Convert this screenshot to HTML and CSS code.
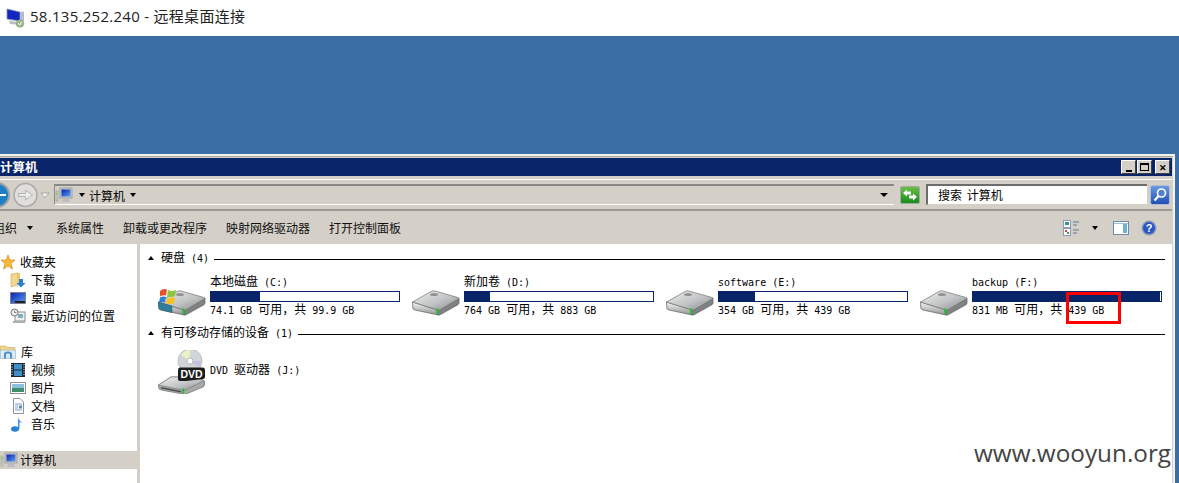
FILE: index.html
```html
<!DOCTYPE html>
<html lang="zh-CN">
<head>
  <meta charset="UTF-8">
  <title>58.135.252.240 - 远程桌面连接</title>
  <link rel="stylesheet" href="styles.css">
</head>
<body>

  <svg class="defs" width="0" height="0">
    <defs>
      <linearGradient id="hddTop" x1="0" y1="0" x2="1" y2="1">
        <stop offset="0" stop-color="#eeeeee"/>
        <stop offset=".55" stop-color="#c2c5c5"/>
        <stop offset="1" stop-color="#858989"/>
      </linearGradient>
      <linearGradient id="hddSide" x1="0" y1="0" x2="0" y2="1">
        <stop offset="0" stop-color="#f8f8f8"/>
        <stop offset="1" stop-color="#8f9191"/>
      </linearGradient>
      <linearGradient id="screen" x1="0" y1="0" x2="1" y2="1">
        <stop offset="0" stop-color="#0a1fb0"/>
        <stop offset="1" stop-color="#5aa0f0"/>
      </linearGradient>
      <linearGradient id="goGreen" x1="0" y1="0" x2="0" y2="1">
        <stop offset="0" stop-color="#6cc04a"/>
        <stop offset="1" stop-color="#178a1c"/>
      </linearGradient>
      <linearGradient id="searchBlue" x1="0" y1="0" x2="0" y2="1">
        <stop offset="0" stop-color="#6f9be4"/>
        <stop offset="1" stop-color="#1c4db4"/>
      </linearGradient>
      <symbol id="hdd" viewBox="0 0 48 26">
        <path d="M.5 12L26 20V25L3 20Q1 19.500 .8 18Z" fill="url(#hddSide)" stroke="#5f5f5f" stroke-width=".7"/>
        <path d="M26 20L47 8V13Q47 14 46 14.700L28 24.800Q27 25.300 26 25Z" fill="#7f8282" stroke="#5f5f5f" stroke-width=".7"/>
        <path d="M.5 12L19 1.500Q21 .3 23 1L46 7.500Q47.500 8 46.500 8.800L28 19.800Q27 20.300 26 20Z" fill="url(#hddTop)" stroke="#737373" stroke-width=".7"/>
        <ellipse cx="22" cy="4.500" rx="4" ry="1.600" fill="#8f9393"/>
        <rect x="24" y="18.500" width="2.200" height="5.500" fill="#2fbd3c"/>
      </symbol>
      <symbol id="pc" viewBox="0 0 18 16">
        <rect x="1" y="4" width="2" height="10" fill="#c8cfc0" stroke="#8a9a80" stroke-width=".5"/>
        <rect x="1.500" y="6" width="1" height="1" fill="#39c43c"/>
        <rect x="5" y="1" width="12" height="10" fill="#c9ccd0" stroke="#7d8288" stroke-width=".6"/>
        <rect x="6.500" y="2.500" width="9" height="7" fill="url(#screen)"/>
        <path d="M8 12H14L15 15H7Z" fill="#b9bcc0"/>
      </symbol>
    </defs>
  </svg>

  <header class="rdp-bar">
    <svg class="rdp-icon" viewBox="0 0 20 20" width="20" height="20">
      <path d="M1 1L14 4V13L1 11Z" fill="#1326c4" stroke="#8c94a8" stroke-width=".8"/>
      <path d="M14 4L18 3.500V13L14 13.500Z" fill="#b4bac6"/>
      <path d="M3 12.500L14 14.500L16 17L4 16Z" fill="#bcc0c4"/>
      <circle cx="14" cy="15.500" r="3.800" fill="#a3bb8e" stroke="#7f9672" stroke-width=".6"/>
      <path d="M12.500 15.500L13.700 17L15.700 14" fill="none" stroke="#fff" stroke-width="1"/>
    </svg>
    <span class="rdp-title">58.135.252.240 - 远程桌面连接</span>
  </header>

  <main class="desktop">
    <section class="window">
      <div class="titlebar">
        <span class="titlebar-text">计算机</span>
        <div class="win-btns">
          <span class="win-btn"><i class="glyph-min"></i></span>
          <span class="win-btn"><i class="glyph-max"></i></span>
          <span class="win-btn win-close">✕</span>
        </div>
      </div>

      <div class="addressbar">
        <div class="nav-btns">
          <svg class="nav-svg" viewBox="0 0 54 30" width="54" height="30">
            <circle cx="-3" cy="15" r="12" fill="#1f7fc4" stroke="#9aa0a8" stroke-width="2"/>
            <rect x="0" y="14" width="6" height="2" fill="#fff"/>
            <circle cx="25.500" cy="15" r="11.500" fill="#dfdedb" stroke="#a9a9a9" stroke-width="1.500"/>
            <path d="M18.500 13.500H25.500V10L32.500 15L25.500 20V16.500H18.500Z" fill="#ecebe8" stroke="#b4b4b2" stroke-width="1"/>
            <path d="M41 13H49L45 18Z" fill="#efeeeb" stroke="#9a9a98" stroke-width=".8"/>
          </svg>
        </div>
        <div class="address-box">
          <svg class="pc-icon" width="18" height="16"><use href="#pc"/></svg>
          <i class="caret caret-addr"></i>
          <span class="crumb">计算机</span>
          <i class="caret"></i>
          <i class="caret caret-end"></i>
        </div>
        <svg class="go-btn" viewBox="0 0 20 18" width="20" height="18">
          <rect x=".5" y=".5" width="19" height="17" rx="1.500" fill="url(#goGreen)" stroke="#a3ab9f"/>
          <path d="M3 7L7 3.500V5.500H11V8.500H7V10.500Z" fill="#fff"/>
          <path d="M17 11L13 14.500V12.500H9V9.500H13V7.500Z" fill="#fff"/>
        </svg>
        <div class="search-box">搜索 计算机</div>
        <svg class="search-btn" viewBox="0 0 20 20" width="20" height="20">
          <rect x=".5" y=".5" width="19" height="19" rx="2" fill="url(#searchBlue)" stroke="#b4bed2"/>
          <circle cx="11.500" cy="8" r="4" fill="#4f80d4" stroke="#fff" stroke-width="1.600"/>
          <path d="M8.500 11L4.500 15.500" stroke="#fff" stroke-width="2.200"/>
        </svg>
      </div>

      <div class="toolbar">
        <span class="tool tool-org">组织</span>
        <i class="caret caret-org"></i>
        <span class="tool">系统属性</span>
        <span class="tool">卸载或更改程序</span>
        <span class="tool">映射网络驱动器</span>
        <span class="tool">打开控制面板</span>
        <div class="tool-icons">
          <svg viewBox="0 0 16 16" width="16" height="16">
            <rect x=".5" y=".5" width="7" height="7" fill="#fff" stroke="#8a9ab8"/>
            <rect x="2" y="2" width="4" height="3" fill="#3f8f8a"/>
            <rect x=".5" y="8.500" width="7" height="7" fill="#fff" stroke="#8a9ab8"/>
            <rect x="2" y="10" width="2" height="2" fill="#d8402f"/>
            <rect x="4" y="12" width="2" height="2" fill="#3d9a3d"/>
            <path d="M10 2H16M10 5H14M10 10H16M10 13H14" stroke="#5a7896"/>
          </svg>
          <i class="caret caret-view"></i>
          <svg class="pane-icon" viewBox="0 0 16 16" width="16" height="16">
            <rect x=".5" y="1.500" width="15" height="13" fill="#fff" stroke="#6a8cb0"/>
            <rect x="10" y="3" width="4" height="10" fill="#6fb0d0"/>
            <path d="M1 3.500H15" stroke="#9fc0d8"/>
          </svg>
          <svg class="help-icon" viewBox="0 0 16 16" width="16" height="16">
            <circle cx="8" cy="8" r="7.500" fill="#8f9bb4"/>
            <circle cx="8" cy="8" r="6" fill="#2a55c4"/>
            <text x="8" y="12" class="help-mark">?</text>
          </svg>
        </div>
      </div>

      <div class="panes">
        <nav class="sidebar">
          <div class="nav-item">
            <svg viewBox="0 0 16 16" width="16" height="16"><path d="M8 1L10 6H15L11 9.500L12.500 15L8 12L3.500 15L5 9.500L1 6H6Z" fill="#f8b83c" stroke="#d98a20" stroke-width=".7"/></svg>
            <span>收藏夹</span>
          </div>
          <div class="nav-item nav-child">
            <svg viewBox="0 0 16 16" width="16" height="16"><path d="M1 2L8 1V13L1 15Z" fill="#f0d890" stroke="#c9a850" stroke-width=".6"/><path d="M8 1H10V13H8Z" fill="#e8c670"/><path d="M9 7H13V11H15.500L11 15.500L6.500 11H9Z" fill="#2a7fd0"/></svg>
            <span>下载</span>
          </div>
          <div class="nav-item nav-child">
            <svg viewBox="0 0 16 16" width="16" height="16"><rect x=".5" y="2.500" width="15" height="11" fill="url(#screen)" stroke="#7d8696"/><rect x="5" y="11" width="10" height="2" fill="#222"/></svg>
            <span>桌面</span>
          </div>
          <div class="nav-item nav-child">
            <svg viewBox="0 0 16 16" width="16" height="16"><rect x="5" y="4" width="10" height="9" fill="#eef0f0" stroke="#88908c"/><rect x="8" y="6" width="5" height="4" fill="#7fb0c0"/><circle cx="4.500" cy="4.500" r="3.500" fill="#eee" stroke="#777"/><path d="M4.500 2.500V4.500H6.500" fill="none" stroke="#555" stroke-width=".7"/><rect x="3" y="13" width="12" height="2" fill="#aab0ae"/></svg>
            <span>最近访问的位置</span>
          </div>
          <div class="nav-item nav-group">
            <svg viewBox="0 0 16 16" width="16" height="16"><path d="M.5 4V2H6L7 3.500H15V7H.5Z" fill="#f2d68a" stroke="#c9a850" stroke-width=".6"/><path d="M.5 6H15.500V14.500H.5Z" fill="#dbeaf4" stroke="#8fb0c8" stroke-width=".6"/><path d="M5 14.500V10Q5 8.500 8 8.500Q11 8.500 11 10V14.500" fill="none" stroke="#4f90c4" stroke-width="2"/></svg>
            <span>库</span>
          </div>
          <div class="nav-item nav-child">
            <svg viewBox="0 0 16 16" width="16" height="16"><rect x="1" y="1" width="14" height="14" fill="#1e2a30"/><rect x="4" y="2" width="8" height="5.500" fill="#3f90c8"/><rect x="4" y="8.500" width="8" height="5.500" fill="#3f90c8"/><path d="M2 2V14M14 2V14" stroke="#fff" stroke-dasharray="1 1.500" stroke-width="1"/></svg>
            <span>视频</span>
          </div>
          <div class="nav-item nav-child">
            <svg viewBox="0 0 16 16" width="16" height="16"><rect x=".5" y="2.500" width="15" height="11" fill="#fff" stroke="#8a9096"/><rect x="2" y="4" width="12" height="4" fill="#8ac0dc"/><rect x="2" y="8" width="12" height="4" fill="#3f8f6f"/></svg>
            <span>图片</span>
          </div>
          <div class="nav-item nav-child">
            <svg viewBox="0 0 16 16" width="16" height="16"><path d="M3.500 .5H10L13.500 4V15.500H3.500Z" fill="#fff" stroke="#8a929c"/><path d="M5 6H12M5 8H8M5 10H8M5 12H12" stroke="#7f9cc0"/><rect x="9" y="7.500" width="3" height="3" fill="#4f90c0"/></svg>
            <span>文档</span>
          </div>
          <div class="nav-item nav-child">
            <svg viewBox="0 0 16 16" width="16" height="16"><ellipse cx="5" cy="13" rx="4" ry="2.800" fill="#2a80d4"/><path d="M8 13V1Q9 5 13 7Q11 6.500 9.500 6V13Z" fill="#3a90e0"/></svg>
            <span>音乐</span>
          </div>
          <div class="nav-item nav-group nav-selected">
            <svg width="18" height="16"><use href="#pc"/></svg>
            <span>计算机</span>
          </div>
        </nav>

        <div class="content">
          <h3 class="group-head">
            <i class="caret-up"></i>
            <span>硬盘<span class="lat"> (4)</span></span>
            <i class="group-line"></i>
          </h3>
          <div class="drives">
            <div class="drive">
              <div class="drive-icon">
                <svg class="hdd-svg" viewBox="0 0 48 26" width="48" height="26">
                  <use href="#hdd" width="48" height="26"/>
                  <path d="M.5 12L14 16V22.500L3 20Q1 19.500 .8 18Z" fill="#2f7f9c" stroke="#356" stroke-width=".5"/>
                  <g transform="translate(0 -2)">
                    <path d="M2 3Q5 0 9 1.500L8 7.500Q5 6.500 2 8.500Z" fill="#e8502a"/>
                    <path d="M10 2Q14 4 18 2L17 8Q13 10 9 8.500Z" fill="#8cc63f"/>
                    <path d="M2 9.500Q5 8 8 9L7 14.500Q4 13.500 1 15Z" fill="#2f80d8"/>
                    <path d="M9 9.500Q13 11 17 9L16 15Q12 17 8 15Z" fill="#f8c020"/>
                  </g>
                </svg>
              </div>
              <div class="drive-info">
                <div class="drive-name">本地磁盘<span class="lat"> (C:)</span></div>
                <div class="bar"><div class="bar-fill" style="width: 26%"></div></div>
                <div class="drive-free"><span class="lat">74.1 GB </span>可用，共<span class="lat"> 99.9 GB</span></div>
              </div>
            </div>
            <div class="drive">
              <div class="drive-icon"><svg class="hdd-svg" width="48" height="26"><use href="#hdd"/></svg></div>
              <div class="drive-info">
                <div class="drive-name">新加卷<span class="lat"> (D:)</span></div>
                <div class="bar"><div class="bar-fill" style="width: 13.500%"></div></div>
                <div class="drive-free"><span class="lat">764 GB </span>可用，共<span class="lat"> 883 GB</span></div>
              </div>
            </div>
            <div class="drive">
              <div class="drive-icon"><svg class="hdd-svg" width="48" height="26"><use href="#hdd"/></svg></div>
              <div class="drive-info">
                <div class="drive-name"><span class="lat">software (E:)</span></div>
                <div class="bar"><div class="bar-fill" style="width: 19%"></div></div>
                <div class="drive-free"><span class="lat">354 GB </span>可用，共<span class="lat"> 439 GB</span></div>
              </div>
            </div>
            <div class="drive">
              <div class="drive-icon"><svg class="hdd-svg" width="48" height="26"><use href="#hdd"/></svg></div>
              <div class="drive-info">
                <div class="drive-name"><span class="lat">backup (F:)</span></div>
                <div class="bar"><div class="bar-fill" style="width: 99.500%"></div></div>
                <div class="drive-free"><span class="lat">831 MB </span>可用，共<span class="lat"> 439 GB</span></div>
              </div>
            </div>
          </div>

          <h3 class="group-head group-removable">
            <i class="caret-up"></i>
            <span>有可移动存储的设备<span class="lat"> (1)</span></span>
            <i class="group-line"></i>
          </h3>
          <div class="drive drive-dvd">
            <div class="drive-icon dvd-icon">
              <svg viewBox="0 0 48 44" width="48" height="44">
                <circle cx="32" cy="11" r="12" fill="#d2d5d8" stroke="#a8a8a8" stroke-width=".6"/>
                <path d="M32 11L23 5A11 11 0 0 1 32 0Z" fill="#e6f2c4"/>
                <path d="M32 11L41 17A11 11 0 0 0 43 11Z" fill="#c8c0e0"/>
                <circle cx="32" cy="11" r="3" fill="#fff" stroke="#999" stroke-width=".6"/>
                <path d="M.5 35L13 27H40L46.500 31V35Q46.500 36 45 37L28 44Q27 44.500 25 44L3 40Q1 39.500 .8 38Z" fill="#a8aaaa" stroke="#6f6f6f" stroke-width=".7"/>
                <path d="M.5 35L13 27H38L46 31L27 40Q26 40.500 24 40Z" fill="url(#hddTop)" stroke="#7c7c7c" stroke-width=".7"/>
                <path d="M3 37L23 41V42.500L3 38.500Z" fill="#4a4a4a"/>
                <rect x="24" y="38.500" width="2.200" height="5" fill="#2fbd3c"/>
                <path d="M20 20Q20 17.500 22 17.500H45Q47 17.500 47 20V27Q47 29 45 29L28 31H22Q20 31 20 29Z" fill="#1c1c1c"/>
                <text x="33.500" y="28" class="dvd-mark">DVD</text>
              </svg>
            </div>
            <div class="drive-name dvd-name"><span class="lat">DVD </span>驱动器<span class="lat"> (J:)</span></div>
          </div>
        </div>
      </div>
    </section>
  </main>

  <div class="red-box"></div>
  <div class="watermark">www.wooyun.org</div>

</body>
</html>
```

FILE: styles.css
```css
html, body { margin: 0; padding: 0; }
body {
  width: 1179px;
  height: 483px;
  overflow: hidden;
  display: flex;
  flex-direction: column;
  position: relative;
  background: #fff;
  font-family: "Noto Sans CJK SC", "Liberation Sans", sans-serif;
  font-size: 12px;
  color: #000;
}
i { display: block; font-style: normal; }
.defs { position: absolute; }

/* remote desktop bar */
.rdp-bar { height: 36px; box-sizing: border-box; flex: none; display: flex; align-items: center; padding: 0 0 5px 6px; gap: 4px; background: #fff; }
.rdp-icon { flex: none; margin-top: 4px; }
.rdp-title { font-family: "Open Sans", "Noto Sans CJK SC", sans-serif; font-size: 15px; letter-spacing: .28px; color: #222; }

/* desktop + window */
.desktop { flex: 1; min-height: 0; background: #3a6ea5; padding: 118px 4px 0 0; display: flex; }
.window {
  flex: 1;
  min-width: 0;
  display: flex;
  flex-direction: column;
  background: #d4d0c8;
  border-top: 2px solid #f2f1ee;
  border-right: 2px solid #f2f1ee;
  box-shadow: inset 0 1px 0 #a8a6a0;
  padding: 2px 1px 0 0;
}
.titlebar { height: 18px; flex: none; background: #0a246a; display: flex; align-items: center; justify-content: space-between; padding-right: 2px; }
.titlebar-text { color: #fff; font-weight: 700; font-size: 12.500px; line-height: 18px; }
.win-btns { display: flex; gap: 1px; }
.win-btn {
  width: 15px;
  height: 14px;
  box-sizing: border-box;
  background: #d4d0c8;
  border: 1px solid;
  border-color: #fff #404040 #404040 #fff;
  display: flex;
  align-items: center;
  justify-content: center;
  font-size: 9px;
  font-weight: 700;
  line-height: 1;
}
.win-close { margin-left: 2px; }
.glyph-min { width: 6px; height: 2px; background: #000; margin-top: 7px; }
.glyph-max { width: 9px; height: 8px; box-sizing: border-box; border: 1px solid #000; border-top-width: 2px; }

/* address row */
.addressbar {
  height: 32px;
  flex: none;
  margin-top: 3px;
  box-sizing: border-box;
  border-top: 1px solid #fff;
  border-bottom: 2px solid #9c9a94;
  display: flex;
  align-items: center;
  position: relative;
}
.nav-btns { width: 54px; flex: none; height: 30px; }
.nav-svg { display: block; }
.address-box {
  width: 840px;
  flex: none;
  height: 21px;
  box-sizing: border-box;
  border-top: 2px solid #8a8884;
  border-left: 1px solid #8a8884;
  border-bottom: 1px solid #fff;
  display: flex;
  align-items: center;
  font-size: 12px;
}
.pc-icon { flex: none; }
.crumb { margin-left: 4px; margin-right: 5px; }
.caret { width: 0; height: 0; border-left: 3.500px solid transparent; border-right: 3.500px solid transparent; border-top: 4px solid #000; flex: none; }
.caret-addr { margin-left: 6px; }
.caret-end { margin-left: auto; margin-right: 6px; border-left-width: 4px; border-right-width: 4px; }
.go-btn { flex: none; margin-left: 6px; }
.search-box {
  width: 221px;
  flex: none;
  height: 21px;
  margin-left: 6px;
  box-sizing: border-box;
  background: #fff;
  border-top: 2px solid #6e6c68;
  border-left: 2px solid #6e6c68;
  border-bottom: 1px solid #d4d0c8;
  padding-left: 10px;
  line-height: 18px;
  word-spacing: 2px;
}
.search-btn { flex: none; margin-left: 3px; }

/* toolbar */
.toolbar { height: 33px; flex: none; display: flex; align-items: center; padding-right: 15px; }
.tool { margin-left: 19px; white-space: nowrap; color: #111; }
.tool-org { margin-left: -7px; }
.caret-org { margin-left: 10px; margin-right: 4px; }
.tool-icons { margin-left: auto; display: flex; align-items: center; }
.caret-view { margin-left: 13px; }
.pane-icon { margin-left: 15px; }
.help-icon { margin-left: 12px; }
.help-mark { font-family: "Liberation Sans", sans-serif; font-size: 11px; font-weight: 700; fill: #fff; text-anchor: middle; }

/* panes */
.panes { flex: 1; min-height: 0; display: flex; background: #fff; }
.sidebar { width: 137px; flex: none; padding-top: 9px; border-right: 3px solid #d4d0c8; background: #fff; }
.nav-item { height: 18px; display: flex; align-items: center; gap: 4px; white-space: nowrap; line-height: 18px; }
.nav-item svg { flex: none; }
.nav-child { padding-left: 10px; gap: 5px; }
.nav-group { margin-top: 18px; gap: 5px; }
.nav-selected { margin-top: 18px; background: #d4d0c8; gap: 2px; }

.content { flex: 1; min-width: 0; padding: 5px 7px 0 8px; }
.lat { font-family: "DejaVu Sans Mono", monospace; font-size: 10px; white-space: pre; }
.group-head { margin: 0; height: 18px; font-weight: 400; font-size: 12px; display: flex; align-items: center; line-height: 18px; }
.caret-up { width: 0; height: 0; border-left: 3.500px solid transparent; border-right: 3.500px solid transparent; border-bottom: 4px solid #000; margin-right: 7px; flex: none; }
.group-line { flex: 1; height: 1px; background: #000; margin-left: 5px; margin-top: 2px; }
.group-removable { margin-top: 8px; }

.drives { display: grid; grid-template-columns: repeat(4, 254px); margin-top: 8px; padding-left: 10px; }
.drive { display: flex; gap: 4px; }
.drive-icon { width: 48px; flex: none; padding-top: 15px; }
.drive-icon svg { display: block; }
.hdd-svg { overflow: visible; }
.drive-info { width: 190px; }
.drive-name { height: 14px; line-height: 12px; white-space: nowrap; }
.bar { height: 11px; margin-top: 2px; box-sizing: border-box; border: 1px solid #0a246a; background: #fff; }
.bar-fill { height: 100%; background: #0a246a; }
.drive-free { height: 14px; line-height: 12px; padding-top: 1px; box-sizing: border-box; white-space: nowrap; }

.drive-dvd { margin-top: 8px; padding-left: 10px; align-items: center; }
.dvd-icon { padding-top: 0; }
.dvd-name { margin-top: -4px; }
.dvd-mark { font-family: "Liberation Sans", sans-serif; font-size: 10.500px; font-weight: 700; fill: #fff; text-anchor: middle; }

/* annotation + watermark drawn over the screenshot */
.red-box { position: absolute; left: 1066px; top: 292px; width: 55px; height: 32px; box-sizing: border-box; border: 3px solid #f00; }
.watermark { position: absolute; left: 974px; top: 436px; font-family: "Open Sans", sans-serif; font-size: 24.300px; line-height: 34px; color: #444; white-space: nowrap; }
```
